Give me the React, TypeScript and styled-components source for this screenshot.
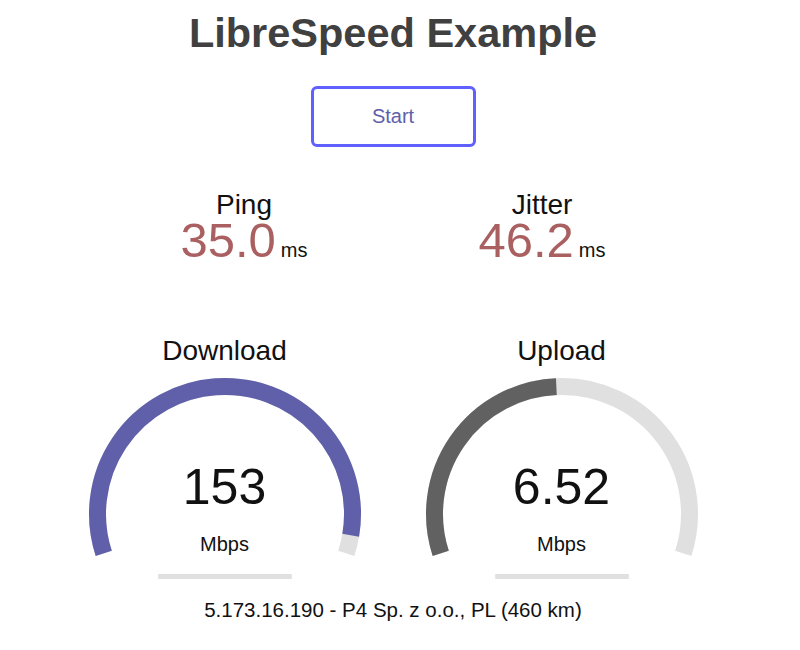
import React from "react";
import styled, { createGlobalStyle } from "styled-components";

const GlobalStyle = createGlobalStyle`
  html, body { margin: 0; padding: 0; background: #ffffff; }
  body { font-family: "Liberation Sans", Arial, Helvetica, sans-serif; color: #111111; }
`;

const Page = styled.main`
  width: 786px;
  display: flex;
  flex-direction: column;
  align-items: center;
  text-align: center;
`;

const Title = styled.h1`
  margin: 9px 0 0;
  font-size: 41.5px;
  line-height: 48px;
  font-weight: 700;
  color: #404040;
`;

const StartButton = styled.button`
  margin-top: 29px;
  width: 165px;
  height: 61px;
  box-sizing: border-box;
  border: 3px solid #6060ff;
  border-radius: 6px;
  background: transparent;
  color: #6060aa;
  font-family: inherit;
  font-size: 20px;
  line-height: 51px;
  padding: 0;
  cursor: pointer;
`;

const StatRow = styled.section`
  margin-top: 42px;
  display: flex;
  justify-content: center;
  gap: 5px;
`;

const Stat = styled.div`
  width: 293px;
  display: flex;
  flex-direction: column;
  align-items: center;
`;

const StatName = styled.div`
  font-size: 28px;
  line-height: 32px;
`;

const StatValueLine = styled.div`
  line-height: 38px;
  white-space: nowrap;
`;

const StatValue = styled.span`
  font-size: 49px;
  color: #aa6060;
`;

const Unit = styled.span`
  font-size: 20px;
  margin-left: 5px;
`;

const GaugeRow = styled.section`
  margin-top: 64px;
  display: flex;
  justify-content: center;
  gap: 3px;
`;

const Gauge = styled.div`
  width: 334px;
  display: flex;
  flex-direction: column;
  align-items: center;
`;

const GaugeName = styled.div`
  font-size: 28px;
  line-height: 32px;
  margin-bottom: 6px;
`;

const Dial = styled.div`
  display: grid;
  width: 334px;
  height: 210px;
  & > * { grid-area: 1 / 1; }
`;

const Readout = styled.div`
  padding-top: 89px;
  display: flex;
  flex-direction: column;
  align-items: center;
`;

const MeterText = styled.div`
  font-size: 50px;
  line-height: 50px;
  color: #111111;
`;

const MeterUnit = styled.div`
  margin-top: 20px;
  font-size: 20px;
  line-height: 24px;
`;

const IpLine = styled.div`
  margin-top: 15px;
  font-size: 20.5px;
  line-height: 24px;
`;

const W = 334;
const CX = W / 2;
const CY = 141;
const R = 127.5;
const SW = 17;

function pt(deg: number) {
  const a = (deg * Math.PI) / 180;
  return [CX + R * Math.cos(a), CY + R * Math.sin(a)];
}

function arcPath(fromDeg: number, toDeg: number) {
  const [x1, y1] = pt(fromDeg);
  const [x2, y2] = pt(toDeg);
  const large = toDeg - fromDeg > 180 ? 1 : 0;
  return `M ${x1.toFixed(2)} ${y1.toFixed(2)} A ${R} ${R} 0 ${large} 1 ${x2.toFixed(2)} ${y2.toFixed(2)}`;
}

function mbpsToAmount(s: number) {
  return 1 - 1 / Math.pow(1.3, Math.sqrt(s));
}

function MeterDrawing({ amount, color }: { amount: number; color: string }) {
  const start = -198;
  const end = amount * 216 - 198;
  return (
    <svg width={W} height={210} viewBox={`0 0 ${W} 210`}>
      <path d={arcPath(start, 18)} fill="none" stroke="#e0e0e0" strokeWidth={SW} />
      <path d={arcPath(start, end)} fill="none" stroke={color} strokeWidth={SW} />
      <rect x={W * 0.3} y={201} width={W * 0.4} height={5} fill="#e0e0e0" />
    </svg>
  );
}

function SpeedGauge({ name, value, color }: { name: string; value: string; color: string }) {
  return (
    <Gauge>
      <GaugeName>{name}</GaugeName>
      <Dial>
        <MeterDrawing amount={mbpsToAmount(parseFloat(value))} color={color} />
        <Readout>
          <MeterText>{value}</MeterText>
          <MeterUnit>Mbps</MeterUnit>
        </Readout>
      </Dial>
    </Gauge>
  );
}

export default function App() {
  return (
    <>
      <GlobalStyle />
      <Page>
        <Title>LibreSpeed Example</Title>
        <StartButton>Start</StartButton>
        <StatRow>
          <Stat>
            <StatName>Ping</StatName>
            <StatValueLine>
              <StatValue>35.0</StatValue>
              <Unit>ms</Unit>
            </StatValueLine>
          </Stat>
          <Stat>
            <StatName>Jitter</StatName>
            <StatValueLine>
              <StatValue>46.2</StatValue>
              <Unit>ms</Unit>
            </StatValueLine>
          </Stat>
        </StatRow>
        <GaugeRow>
          <SpeedGauge name="Download" value="153" color="#6060aa" />
          <SpeedGauge name="Upload" value="6.52" color="#616161" />
        </GaugeRow>
        <IpLine>5.173.16.190 - P4 Sp. z o.o., PL (460 km)</IpLine>
      </Page>
    </>
  );
}
